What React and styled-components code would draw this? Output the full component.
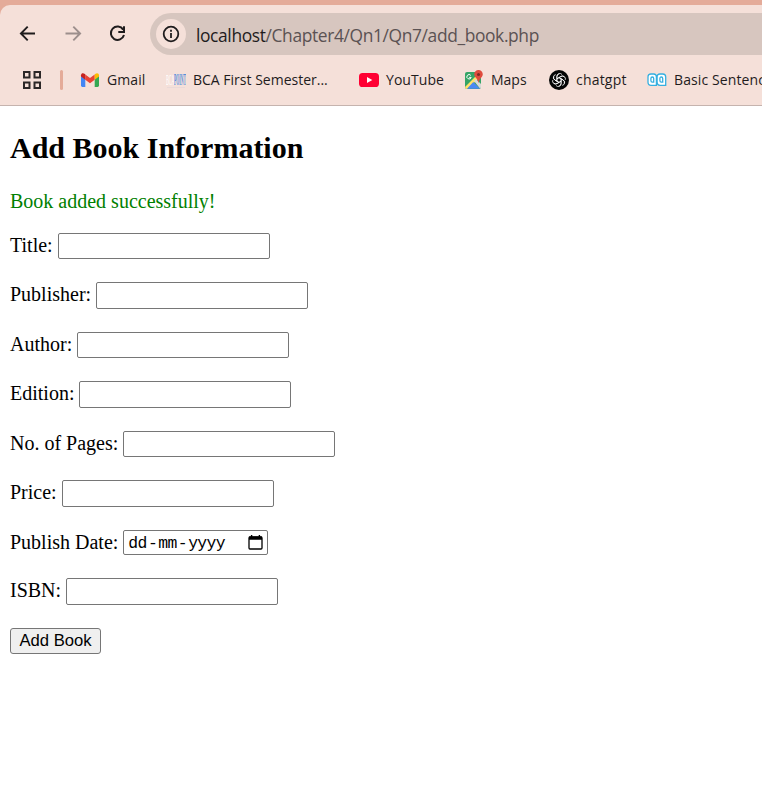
import React from "react";
import styled, { createGlobalStyle } from "styled-components";

const GlobalStyle = createGlobalStyle`
  * { box-sizing: border-box; }
  body { margin: 0; background: #fff; overflow: hidden; }
`;

const Browser = styled.div`
  width: 762px;
  height: 812px;
  overflow: hidden;
  background: #fff;
`;

const Chrome = styled.header`
  height: 106px;
  padding-top: 5px;
  background: #e4ab99;
`;

const ChromePanel = styled.div`
  height: 101px;
  background: #f5e0d9;
  border-top-left-radius: 10px;
  border-bottom: 1px solid #c5b3ae;
  overflow: hidden;
`;

const Toolbar = styled.div`
  display: flex;
  align-items: center;
  height: 42px;
  margin-top: 8px;
  padding-left: 18px;
`;

const NavButton = styled.button`
  display: flex;
  width: 20px;
  height: 20px;
  padding: 0;
  border: 0;
  background: none;
  margin: -2px 25px 0 0;
  color: ${(p) => (p.$muted ? "#9c8e8c" : "#1f1c1d")};
`;

const AddressBar = styled.div`
  display: flex;
  align-items: center;
  flex: 1;
  height: 42px;
  margin-left: -3px;
  padding-left: 6px;
  border-radius: 21px 0 0 21px;
  background: #d7c6bf;
`;

const SiteInfo = styled.span`
  display: flex;
  align-items: center;
  justify-content: center;
  width: 30px;
  height: 30px;
  border-radius: 50%;
  background: #f5e0d9;
`;

const Url = styled.span`
  margin: 1px 0 0 10px;
  font: 17.4px/26px "Open Sans", sans-serif;
  letter-spacing: -0.37px;
  color: #5b5253;
  white-space: nowrap;
`;

const Host = styled.span`
  color: #1f1c1d;
`;

const Bookmarks = styled.nav`
  display: flex;
  align-items: center;
  height: 50px;
  padding-left: 22px;

  > * {
    flex: none;
  }
`;

const Divider = styled.span`
  width: 3px;
  height: 20px;
  margin: 0 17px 0 18px;
  border-radius: 2px;
  background: #e4ab99;
`;

const Bookmark = styled.a`
  display: flex;
  align-items: center;
  width: ${(p) => p.$width}px;
  height: 20px;
  font: 14px/20px "Open Sans", sans-serif;
  letter-spacing: ${(p) => p.$spacing}px;
  color: #1f1c1d;
  white-space: nowrap;
`;

const BookmarkIcon = styled.span`
  display: flex;
  flex: none;
  width: 20px;
  height: 20px;
  margin-right: 7px;
`;

const Page = styled.main`
  padding: 24px 10px 0;
  font: 20px/23px "Liberation Serif", serif;
  color: #000;
`;

const Heading = styled.h2`
  margin: 0;
  font-size: 30px;
  line-height: 35px;
  font-weight: 700;
`;

const Message = styled.p`
  height: 23px;
  margin: 25px 0 20px;
  color: #008000;
`;

const FieldRow = styled.div`
  display: flex;
  height: ${(p) => p.$height}px;
`;

const Label = styled.label`
  padding-top: 1px;
  margin-right: 5px;
  white-space: nowrap;
`;

const TextInput = styled.input`
  width: 212px;
  height: ${(p) => p.$height}px;
  padding: 1px 3px;
  border: 1px solid #767676;
  border-radius: 2px;
  background: #fff;
  outline: none;
`;

const DateInput = styled.div`
  display: flex;
  align-items: center;
  justify-content: space-between;
  width: 145px;
  height: 25px;
  padding: 0 4px;
  border: 1px solid #767676;
  border-radius: 2px;
`;

const DateParts = styled.span`
  display: flex;
  gap: 1.2px;
  padding-top: 2px;
  font: 16.4px/21px "Liberation Mono", monospace;
  letter-spacing: -0.66px;
`;

const SubmitButton = styled.button`
  display: block;
  width: 91px;
  height: 26px;
  padding: 0 0 1px;
  border: 1px solid #767676;
  border-radius: 3px;
  background: #efefef;
  font: 16.67px/20px "Liberation Sans", sans-serif;
  color: #000;
  white-space: nowrap;
`;

const ArrowIcon = ({ forward }) => (
  <svg width="20" height="20" viewBox="0 0 20 20" fill="none" stroke="currentColor" strokeWidth="1.9">
    <path d={forward ? "M2.5 10.5H17M10.3 3.7l6.8 6.8-6.8 6.8" : "M17 10.5H3M9.7 3.7l-6.8 6.8 6.8 6.8"} />
  </svg>
);

const ReloadIcon = () => (
  <svg width="20" height="20" viewBox="0 0 20 20" fill="none" stroke="currentColor" strokeWidth="2">
    <path d="M15.2 6.6A6.7 6.7 0 1 0 16 12" />
    <path d="M16 3.2v5.7h-5.7" />
  </svg>
);

const InfoIcon = () => (
  <svg width="18" height="18" viewBox="0 0 18 18" fill="none" stroke="#1f1c1d" strokeWidth="1.8">
    <circle cx="9" cy="9" r="7.3" />
    <path d="M9 8v5M9 4.8v1.9" />
  </svg>
);

const AppsIcon = () => (
  <svg width="20" height="20" viewBox="0 0 20 20" fill="none" stroke="#2b2727" strokeWidth="2">
    <path d="M2 2h5.5v5.5H2zM12.5 2H18v5.5h-5.5zM2 12.5h5.5V18H2zM12.5 12.5H18V18h-5.5z" />
  </svg>
);

const GmailIcon = () => (
  <svg width="20" height="20" viewBox="0 0 20 20">
    <path fill="#4285f4" d="M1 5.5l4.3 3.2V17H2.4Q1 17 1 15.6z" />
    <path fill="#34a853" d="M14.7 8.7L19 5.5v10.1q0 1.4-1.4 1.4h-2.9z" />
    <path fill="#ea4335" d="M5.3 4.5L10 8l4.7-3.5v5.2L10 13.2 5.3 9.7z" />
    <path fill="#c5221f" d="M1 5.3C1 3.2 3.2 2.8 4.5 3.8l.8.7v5.2L1 6.5z" />
    <path fill="#fbbc04" d="M14.7 4.5l.8-.7C17 2.8 19 3.3 19 5.3v1.2l-4.3 3.2z" />
  </svg>
);

const BcaIcon = () => (
  <svg width="20" height="20" viewBox="0 0 20 20" fontFamily="Liberation Serif, serif">
    <g transform="translate(0 15) scale(.28 1)">
      <text fontSize="15" fill="#fff">BCA</text>
    </g>
    <g transform="translate(8 15) scale(.24 1)">
      <text fontSize="16" fontWeight="700" fill="#588fdc">POINT</text>
    </g>
    <path d="M1 17.5h18" stroke="#ead9d8" />
  </svg>
);

const YoutubeIcon = () => (
  <svg width="20" height="20" viewBox="0 0 20 20">
    <rect y="3" width="20" height="14" rx="3.6" fill="#ff0033" />
    <path d="M8 7l5.3 3L8 13z" fill="#fff" />
  </svg>
);

const MapsIcon = () => (
  <svg width="20" height="20" viewBox="0 0 20 20">
    <path d="M1 4q0-2 2-2h11l3 3v12q0 2-2 2H3q-2 0-2-2z" fill="#35a466" />
    <path d="M1 17L13.5 4.5l2.5 3L3 19q-2 0-2-2z" fill="#ffe168" />
    <path d="M10 11l2-2 5 5v3q0 1.2-.8 1.8z" fill="#d8d8d8" />
    <path d="M9.3 11.9L3 18.8H16z" fill="#4a89f3" />
    <path d="M6.8 5.4A2.2 2.2 0 1 0 7.2 7.4H5.2" fill="none" stroke="#fff" strokeWidth="1" />
    <path d="M14.5 0A4.3 4.3 0 0 1 18.8 4.3C18.8 7.4 15 8.4 14.5 13.2C14 8.4 10.2 7.4 10.2 4.3A4.3 4.3 0 0 1 14.5 0z" fill="#df4b3d" />
    <circle cx="14.5" cy="4.4" r="1.5" fill="#7f2b24" />
  </svg>
);

const ChatIcon = () => (
  <svg width="20" height="20" viewBox="0 0 20 20">
    <circle cx="10" cy="10" r="10" fill="#050505" />
    <g fill="none" stroke="#fff" strokeWidth=".75" strokeLinejoin="round">
      {[0, 60, 120, 180, 240, 300].map((angle) => (
        <path key={angle} transform={`rotate(${angle} 10 10)`} d="M7.9 11.2V6.4A2.9 2.9 0 0 1 13 4.5M7.9 8.8L11.9 6.5A2.9 2.9 0 0 1 15.5 7.1" />
      ))}
    </g>
  </svg>
);

const QuillIcon = () => (
  <svg width="20" height="20" viewBox="0 0 20 20" fill="#fff" stroke="#35afe0" strokeWidth="1.3">
    <path d="M4 4h2.7q2.7 0 2.7 3v8.3H4Q1 15.3 1 12.3V7q0-3 3-3zM13 4h2.7q3 0 3 3v5.3q0 3 0 3H13q-2.9 0-2.9-3V7Q10.1 4 13 4z" />
    <path d="M5.3 7q1.4 0 1.4 1.6v3.6H5.3q-1.4 0-1.4-1.6v-2Q3.9 7 5.3 7zM14.3 7q1.4 0 1.4 1.6v3.6h-1.4q-1.4 0-1.4-1.6v-2Q12.9 7 14.3 7z" />
  </svg>
);

const CalendarIcon = () => (
  <svg width="15" height="17" viewBox="0 0 15 17">
    <path d="M2 3h11q1 0 1 1v10q0 1-1 1H2q-1 0-1-1V4q0-1 1-1z" fill="none" stroke="#000" strokeWidth="1.3" />
    <path d="M1 2.5h13v3.3H1zM2.9 1h1.4v2H2.9zM10.7 1h1.4v2h-1.4z" />
  </svg>
);

const bookmarks = [
  { label: "Gmail", Icon: GmailIcon, width: 86, spacing: 0.1 },
  { label: "BCA First Semester...", Icon: BcaIcon, width: 193, spacing: 0 },
  { label: "YouTube", Icon: YoutubeIcon, width: 105, spacing: 0.05 },
  { label: "Maps", Icon: MapsIcon, width: 85, spacing: 0 },
  { label: "chatgpt", Icon: ChatIcon, width: 98, spacing: 0.2 },
  { label: "Basic Sentence", Icon: QuillIcon, width: 140, spacing: 0.1 },
];

const fields = [
  { id: "title", label: "Title:", row: 49, height: 26 },
  { id: "publisher", label: "Publisher:", row: 50, height: 27 },
  { id: "author", label: "Author:", row: 49, height: 26 },
  { id: "edition", label: "Edition:", row: 50, height: 27 },
  { id: "pages", label: "No. of Pages:", row: 49, height: 26 },
  { id: "price", label: "Price:", row: 50, height: 27 },
  { id: "date", label: "Publish Date:", row: 48, date: true },
  { id: "isbn", label: "ISBN:", row: 50, height: 27 },
];

export default function App() {
  return (
    <Browser>
      <GlobalStyle />
      <Chrome>
        <ChromePanel>
          <Toolbar>
            <NavButton aria-label="Back"><ArrowIcon /></NavButton>
            <NavButton aria-label="Forward" $muted><ArrowIcon forward /></NavButton>
            <NavButton aria-label="Reload"><ReloadIcon /></NavButton>
            <AddressBar>
              <SiteInfo><InfoIcon /></SiteInfo>
              <Url><Host>localhost</Host>/Chapter4/Qn1/Qn7/add_book.php</Url>
            </AddressBar>
          </Toolbar>
          <Bookmarks>
            <AppsIcon />
            <Divider />
            {bookmarks.map(({ label, Icon, width, spacing }) => (
              <Bookmark key={label} $width={width} $spacing={spacing}>
                <BookmarkIcon><Icon /></BookmarkIcon>
                {label}
              </Bookmark>
            ))}
          </Bookmarks>
        </ChromePanel>
      </Chrome>
      <Page>
        <Heading>Add Book Information</Heading>
        <Message>Book added successfully!</Message>
        <form>
          {fields.map((field) => (
            <FieldRow key={field.id} $height={field.row}>
              <Label htmlFor={field.id}>{field.label}</Label>
              {field.date ? (
                <DateInput id={field.id}>
                  <DateParts>
                    <span>dd</span><span>-</span><span>mm</span><span>-</span><span>yyyy</span>
                  </DateParts>
                  <CalendarIcon />
                </DateInput>
              ) : (
                <TextInput id={field.id} $height={field.height} />
              )}
            </FieldRow>
          ))}
          <SubmitButton type="button">Add Book</SubmitButton>
        </form>
      </Page>
    </Browser>
  );
}
